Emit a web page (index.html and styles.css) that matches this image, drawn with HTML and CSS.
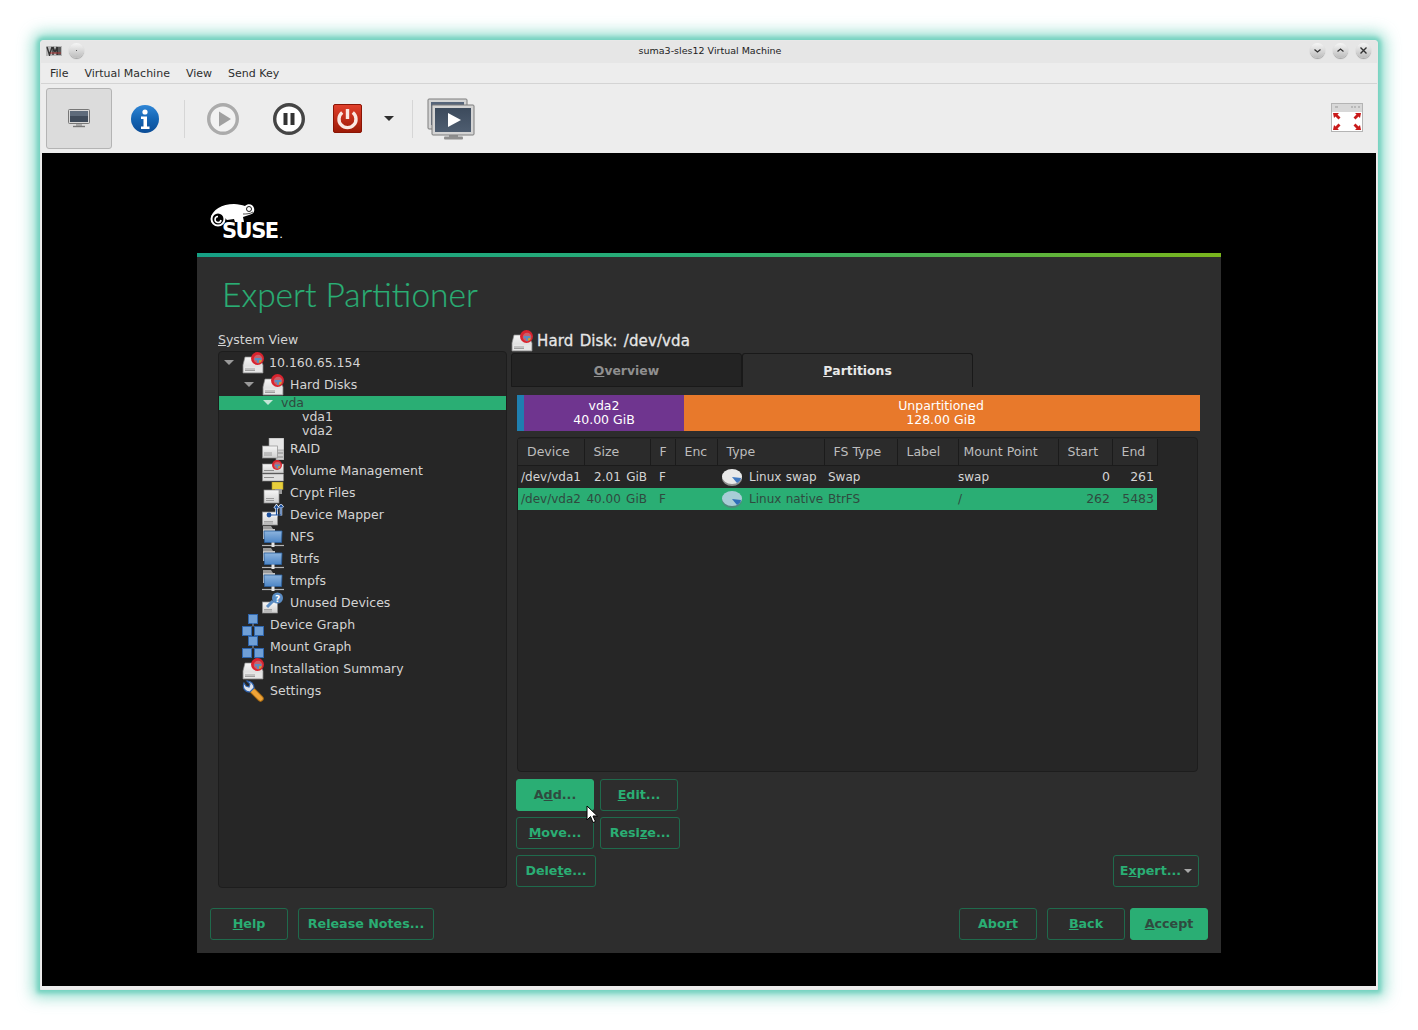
FILE: index.html
```html
<!DOCTYPE html>
<html lang="en">
<head>
    <meta charset="UTF-8">
    <title>suma3-sles12 Virtual Machine</title>
    <link rel="stylesheet" href="styles.css">
</head>
<body>
    <!-- Shared icons -->
    <svg class="defs" width="0" height="0">
        <defs>
            <linearGradient id="diskBody" x1="0" y1="0" x2="0" y2="1">
                <stop offset="0" stop-color="#f6f6f6"/>
                <stop offset="1" stop-color="#cfcfcf"/>
            </linearGradient>
            <linearGradient id="folderBlue" x1="0" y1="0" x2="0" y2="1">
                <stop offset="0" stop-color="#8db4de"/>
                <stop offset="1" stop-color="#4d86c6"/>
            </linearGradient>
            <linearGradient id="infoBlue" x1="0" y1="0" x2="0" y2="1">
                <stop offset="0" stop-color="#2f86d6"/>
                <stop offset=".5" stop-color="#1465b4"/>
                <stop offset="1" stop-color="#0b4c96"/>
            </linearGradient>
            <linearGradient id="powerRed" x1="0" y1="0" x2="0" y2="1">
                <stop offset="0" stop-color="#e2402c"/>
                <stop offset="1" stop-color="#9c1a06"/>
            </linearGradient>
            <linearGradient id="monScreen" x1="0" y1="0" x2="0" y2="1">
                <stop offset="0" stop-color="#3c4a5c"/>
                <stop offset="1" stop-color="#4e5d70"/>
            </linearGradient>

            <symbol id="ic-badge" viewBox="0 0 12 12">
                <circle cx="6" cy="6" r="6" fill="#d9232e"/>
                <circle cx="6.500" cy="6.500" r="4" fill="#c9606a"/>
                <path d="M3.500 5.500h6v2h-2v2.500h-2v-2.500h-2z" fill="#5a8fc0"/>
                <path d="M7.500 7.500h2.500a3.200 3.200 0 0 1-2.500 2.500z" fill="#d8a21f"/>
            </symbol>
            <symbol id="ic-disk" viewBox="0 0 22 22">
                <path d="M3 5h14l4 8v8H1v-8z" fill="url(#diskBody)" stroke="#8e8e8e" stroke-width=".7"/>
                <rect x="2" y="14.500" width="18" height="5.500" fill="#e6e6e6"/>
                <path d="M3 17h10M3 18.500h10" stroke="#8c8c8c" stroke-width=".8"/>
                <use href="#ic-badge" x="9" y="0" width="13" height="13"/>
            </symbol>
            <symbol id="ic-raid" viewBox="0 0 22 22">
                <rect x="7" y="0" width="15" height="13" fill="#e6e6e6" stroke="#8e8e8e" stroke-width=".6"/>
                <rect x="14" y="12" width="8" height="10" fill="#cfcfcf" stroke="#8e8e8e" stroke-width=".6"/>
                <path d="M16 15h5M16 19h5" stroke="#888"/>
                <rect x=".5" y="8" width="15" height="12" fill="url(#diskBody)" stroke="#8e8e8e" stroke-width=".7"/>
                <path d="M2 15h8M2 17h8" stroke="#8c8c8c" stroke-width=".8"/>
            </symbol>
            <symbol id="ic-lvm" viewBox="0 0 22 22">
                <rect x=".5" y="4" width="21" height="9" fill="url(#diskBody)" stroke="#8e8e8e" stroke-width=".6"/>
                <rect x=".5" y="14" width="21" height="7" fill="#e0e0e0" stroke="#8e8e8e" stroke-width=".6"/>
                <path d="M2 10.500h10M2 17.500h10" stroke="#8c8c8c"/>
                <use href="#ic-badge" x="9" y="0" width="12" height="10"/>
            </symbol>
            <symbol id="ic-crypt" viewBox="0 0 22 22">
                <rect x="10" y="0" width="11" height="7.500" fill="#e8cf3c" stroke="#a89420" stroke-width=".6"/>
                <rect x="13" y="7" width="7" height="5" fill="#9a9a9a"/>
                <rect x="2" y="8" width="15" height="13" fill="url(#diskBody)" stroke="#8e8e8e" stroke-width=".7"/>
                <path d="M4 16.500h8M4 18.500h8" stroke="#8c8c8c" stroke-width=".8"/>
            </symbol>
            <symbol id="ic-mapper" viewBox="0 0 22 22">
                <rect x=".5" y="8" width="15" height="13" fill="url(#diskBody)" stroke="#8e8e8e" stroke-width=".7"/>
                <path d="M2 17.500h9M2 19h9" stroke="#8c8c8c" stroke-width=".7"/>
                <path d="M7 11h7.500V3M19 11.500V1.500M12.500 4.500l2-3 2 3M17 3.500l2-2.500 2 2.500" fill="none" stroke="#fff" stroke-width="2.400"/>
                <circle cx="7" cy="11" r="2.400" fill="#1b4f9c"/>
                <path d="M7 11h12V1.500M14.500 11V2M12.500 4.500l2-3 2 3M17 3.500l2-2.500 2 2.500" fill="none" stroke="#1b4f9c" stroke-width="1.200"/>
            </symbol>
            <symbol id="ic-nfs" viewBox="0 0 22 22">
                <path d="M1 0h8l2 3H1z" fill="#9a9a9a"/>
                <rect x="1" y="3" width="12" height="10" fill="#c4c4c4"/>
                <path d="M2 5h18l-.5 11.500H2.500z" fill="url(#folderBlue)" stroke="#2a5f9e" stroke-width=".8"/>
                <path d="M0 19.500h22" stroke="#b5b5b5" stroke-width="1.200"/>
                <rect x="9.500" y="16.500" width="3" height="4.500" fill="#e4e4e4"/>
            </symbol>
            <symbol id="ic-unused" viewBox="0 0 22 22">
                <rect x=".5" y="10" width="15" height="11" fill="url(#diskBody)" stroke="#8e8e8e" stroke-width=".7"/>
                <path d="M2 17.500h8M2 19h8" stroke="#8c8c8c" stroke-width=".7"/>
                <path d="M5 15l6-6" stroke="#5b8dc4" stroke-width="3"/>
                <circle cx="15.500" cy="6" r="5.500" fill="#5b8dc4"/>
                <text x="15.500" y="9.500" class="q-mark">?</text>
            </symbol>
            <symbol id="ic-graph" viewBox="0 0 22 22">
                <rect x="6.500" y=".5" width="9" height="9" fill="#6f9fd6" stroke="#2f66ad"/>
                <rect x=".5" y="12.500" width="9" height="9" fill="#6f9fd6" stroke="#2f66ad"/>
                <rect x="12.500" y="12.500" width="9" height="9" fill="#6f9fd6" stroke="#2f66ad"/>
                <path d="M11 9.500v3" stroke="#8aa6cc"/>
            </symbol>
            <symbol id="ic-settings" viewBox="0 0 22 22">
                <path d="M9 9l9.500 9.500" stroke="#a76a12" stroke-width="6.500" stroke-linecap="round"/>
                <path d="M9 9l9.500 9.500" stroke="#eea338" stroke-width="4.500" stroke-linecap="round"/>
                <path d="M2 3C0 8 3 12 8 12l4-4C12 4 9 1 5 1l3 3-1 3-3-1z" fill="#dfe4ec" stroke="#2f62ad" stroke-width="1.200"/>
            </symbol>
            <symbol id="ic-part" viewBox="0 0 22 22">
                <ellipse cx="11" cy="12.500" rx="10" ry="7.500" fill="#8f8f8f"/>
                <ellipse cx="11" cy="10.500" rx="10" ry="7.500" fill="#e9e9e9"/>
                <path d="M11 11l9 1c0 2-2 4-4 5z" fill="#3f78c0"/>
            </symbol>
            <symbol id="ic-part-sel" viewBox="0 0 22 22">
                <ellipse cx="11" cy="12.500" rx="10" ry="7.500" fill="#4e8b7c"/>
                <ellipse cx="11" cy="10.500" rx="10" ry="7.500" fill="#a8cdd6"/>
                <path d="M11 11l9 1c0 2-2 4-4 5z" fill="#2f6fb8"/>
            </symbol>
            <symbol id="ic-monitor" viewBox="0 0 48 42">
                <rect x="1" y="1" width="39" height="30" rx="1" fill="#d4d4d4" stroke="#7c7c7c"/>
                <rect x="4" y="4" width="33" height="23" fill="#56657a"/>
            </symbol>
        </defs>
    </svg>

    <div class="window">
        <div class="titlebar">
            <svg class="app-icon" width="16" height="10" viewBox="0 0 16 10">
                <rect width="16" height="10" fill="#b8b8b8"/>
                <path d="M1 1l2.500 8L6 1M7 9V1l2 5 2-5v8M12 9V1M14 9V1" fill="none" stroke="#333" stroke-width="1.400"/>
                <path d="M4 7h11" stroke="#a33" stroke-width="1"/>
            </svg>
            <span class="wm-btn wm-pin"><i></i></span>
            <span class="title-text">suma3-sles12 Virtual Machine</span>
            <span class="wm-right">
                <span class="wm-btn">
                    <svg width="15" height="15" viewBox="0 0 15 15"><path d="M4.500 6.500l3 2.500 3-2.500" fill="none" stroke="#333" stroke-width="1.300"/></svg>
                </span>
                <span class="wm-btn">
                    <svg width="15" height="15" viewBox="0 0 15 15"><path d="M4.500 8.500l3-2.500 3 2.500" fill="none" stroke="#333" stroke-width="1.300"/></svg>
                </span>
                <span class="wm-btn">
                    <svg width="15" height="15" viewBox="0 0 15 15"><path d="M4.500 4.500l6 6M10.500 4.500l-6 6" fill="none" stroke="#333" stroke-width="1.400"/></svg>
                </span>
            </span>
        </div>

        <div class="menubar">
            <span>File</span>
            <span>Virtual Machine</span>
            <span>View</span>
            <span>Send Key</span>
        </div>

        <div class="toolbar">
            <div class="tool tool-active">
                <svg width="24" height="20" viewBox="0 0 24 20">
                    <rect x="1.500" y=".5" width="21" height="14" rx="1" fill="#d8d8d8" stroke="#777"/>
                    <rect x="3" y="2" width="18" height="11" fill="#3f4b5a"/>
                    <path d="M3 2h18v5H3z" fill="#5e6b7b"/>
                    <path d="M9 15h6v2H9z" fill="#aaa"/>
                    <path d="M6 17.500h12" stroke="#777" stroke-width="1.400"/>
                </svg>
            </div>
            <div class="tool tool-info">
                <svg width="30" height="30" viewBox="0 0 30 30">
                    <circle cx="15" cy="15" r="14" fill="url(#infoBlue)"/>
                    <circle cx="15" cy="8" r="2.600" fill="#fff"/>
                    <path d="M11 12.500h6v10h2.500v2.500h-8.500v-2.500h2.500v-7.500h-2.500z" fill="#fff"/>
                </svg>
            </div>
            <div class="tool-sep"></div>
            <div class="tool tool-play">
                <svg width="32" height="32" viewBox="0 0 32 32">
                    <circle cx="16" cy="16" r="14.300" fill="#f2f2f2" stroke="#ababab" stroke-width="3.400"/>
                    <path d="M12 8.500l12 7.500-12 7.500z" fill="#a0a0a0"/>
                </svg>
            </div>
            <div class="tool tool-pause">
                <svg width="32" height="32" viewBox="0 0 32 32">
                    <circle cx="16" cy="16" r="14.300" fill="#fff" stroke="#454545" stroke-width="3.400"/>
                    <rect x="10.500" y="10" width="4" height="12" fill="#333"/>
                    <rect x="17.500" y="10" width="4" height="12" fill="#333"/>
                </svg>
            </div>
            <div class="tool tool-power">
                <svg width="29" height="29" viewBox="0 0 29 29">
                    <rect x=".5" y=".5" width="28" height="28" rx="1.500" fill="url(#powerRed)" stroke="#8a1505"/>
                    <path d="M9.200 8.500a8.500 8.500 0 1 0 10.600 0" fill="none" stroke="#fbe8e2" stroke-width="3.400"/>
                    <path d="M14.500 5v10" stroke="#fbe8e2" stroke-width="3.400"/>
                </svg>
            </div>
            <div class="tool-arrow"></div>
            <div class="tool-sep"></div>
            <div class="tool tool-console">
                <svg width="48" height="42" viewBox="0 0 48 42">
                    <use href="#ic-monitor" width="48" height="42"/>
                    <rect x="5" y="7" width="42" height="30" rx="1" fill="#d4d4d4" stroke="#7c7c7c"/>
                    <rect x="8" y="10" width="36" height="24" fill="url(#monScreen)"/>
                    <path d="M21 15l13 7-13 7z" fill="#fff"/>
                    <path d="M22 37h9v2h-9z" fill="#8a8a8a"/>
                    <rect x="17" y="38.500" width="19" height="3" rx="1" fill="#8f8f8f"/>
                </svg>
            </div>
            <div class="tool-fullscreen">
                <svg width="32" height="29" viewBox="0 0 32 29">
                    <rect x=".5" y=".5" width="31" height="28" fill="#fff" stroke="#b4b4b4"/>
                    <rect x="1" y="1" width="30" height="8" fill="#d8d8d8"/>
                    <path d="M4 4h3M20 4h2M23 4h2M27 4h2" stroke="#999"/>
                    <g fill="#c91a1a">
                        <path d="M2 10h6l-1.500 1.500 3 3-2 2-3-3L3 15z"/>
                        <path d="M30 10h-6l1.500 1.500-3 3 2 2 3-3 1.500 1.500z"/>
                        <path d="M2 27h6l-1.500-1.500 3-3-2-2-3 3L3 22z"/>
                        <path d="M30 27h-6l1.500-1.500-3-3 2-2 3 3 1.500-1.500z"/>
                    </g>
                </svg>
            </div>
        </div>

        <div class="vm-screen">
            <div class="logo">
                <svg class="logo-mark" width="46" height="26" viewBox="0 0 46 26">
                    <path d="M1 15C2 7 12 1 24 1c4 0 8 1 11 2 3-3 8-2 9 2 1 4-1 6-5 7-2 1-4 1-6 2l1 5H25l-1-3-7 1-3-3c-1-2-3-3-5-3z" fill="#fff"/>
                    <circle cx="8" cy="16" r="6.500" fill="#000" stroke="#fff" stroke-width="2"/>
                    <path d="M11 17a3 3 0 1 1-3-3.500" fill="none" stroke="#fff" stroke-width="1.600"/>
                    <circle cx="39" cy="6" r="2.500" fill="#fff" stroke="#000" stroke-width=".9"/>
                    <path d="M33 11c3 0 7 0 10-2" fill="none" stroke="#000" stroke-width=".7"/>
                </svg>
                <span class="logo-text">SUSE<small>.</small></span>
            </div>

            <div class="panel">
                <h1>Expert Partitioner</h1>

                <div class="columns">
                    <div class="left-col">
                        <div class="label"><u>S</u>ystem View</div>
                        <ul class="tree">
                            <li class="lvl0"><b class="arrow"></b><svg class="ico"><use href="#ic-disk"/></svg>10.160.65.154</li>
                            <li class="lvl1"><b class="arrow"></b><svg class="ico"><use href="#ic-disk"/></svg>Hard Disks</li>
                            <li class="lvl2 sel"><b class="arrow"></b>vda</li>
                            <li class="lvl3">vda1</li>
                            <li class="lvl3">vda2</li>
                            <li class="lvl1"><svg class="ico"><use href="#ic-raid"/></svg>RAID</li>
                            <li class="lvl1"><svg class="ico"><use href="#ic-lvm"/></svg>Volume Management</li>
                            <li class="lvl1"><svg class="ico"><use href="#ic-crypt"/></svg>Crypt Files</li>
                            <li class="lvl1"><svg class="ico"><use href="#ic-mapper"/></svg>Device Mapper</li>
                            <li class="lvl1"><svg class="ico"><use href="#ic-nfs"/></svg>NFS</li>
                            <li class="lvl1"><svg class="ico"><use href="#ic-nfs"/></svg>Btrfs</li>
                            <li class="lvl1"><svg class="ico"><use href="#ic-nfs"/></svg>tmpfs</li>
                            <li class="lvl1"><svg class="ico"><use href="#ic-unused"/></svg>Unused Devices</li>
                            <li class="lvl0"><svg class="ico"><use href="#ic-graph"/></svg>Device Graph</li>
                            <li class="lvl0"><svg class="ico"><use href="#ic-graph"/></svg>Mount Graph</li>
                            <li class="lvl0"><svg class="ico"><use href="#ic-disk"/></svg>Installation Summary</li>
                            <li class="lvl0"><svg class="ico"><use href="#ic-settings"/></svg>Settings</li>
                        </ul>
                    </div>

                    <div class="right-col">
                        <div class="disk-head"><svg class="ico"><use href="#ic-disk"/></svg>Hard Disk: /dev/vda</div>
                        <div class="tabs">
                            <div class="tab"><u>O</u>verview</div>
                            <div class="tab tab-active"><u>P</u>artitions</div>
                        </div>

                        <div class="tab-body">
                            <div class="usage">
                                <div class="seg seg-blue"></div>
                                <div class="seg seg-purple">vda2<br>40.00 GiB</div>
                                <div class="seg seg-orange">Unpartitioned<br>128.00 GiB</div>
                            </div>

                            <div class="table-box">
                                <table class="parts">
                                    <thead>
                                        <tr>
                                            <th class="c-dev">Device</th>
                                            <th class="c-size">Size</th>
                                            <th class="c-f">F</th>
                                            <th class="c-enc">Enc</th>
                                            <th class="c-type">Type</th>
                                            <th class="c-fs">FS Type</th>
                                            <th class="c-label">Label</th>
                                            <th class="c-mount">Mount Point</th>
                                            <th class="c-start">Start</th>
                                            <th class="c-end">End</th>
                                        </tr>
                                    </thead>
                                    <tbody>
                                        <tr>
                                            <td class="td-dev">/dev/vda1</td>
                                            <td class="td-num td-size">2.01 GiB</td>
                                            <td class="td-f">F</td>
                                            <td></td>
                                            <td class="td-type"><svg class="ico"><use href="#ic-part"/></svg>Linux swap</td>
                                            <td class="td-fs">Swap</td>
                                            <td></td>
                                            <td class="td-mount">swap</td>
                                            <td class="td-num td-start">0</td>
                                            <td class="td-num">261</td>
                                        </tr>
                                        <tr class="sel">
                                            <td class="td-dev">/dev/vda2</td>
                                            <td class="td-num td-size">40.00 GiB</td>
                                            <td class="td-f">F</td>
                                            <td></td>
                                            <td class="td-type"><svg class="ico"><use href="#ic-part-sel"/></svg>Linux native</td>
                                            <td class="td-fs">BtrFS</td>
                                            <td></td>
                                            <td class="td-mount">/</td>
                                            <td class="td-num td-start">262</td>
                                            <td class="td-num">5483</td>
                                        </tr>
                                    </tbody>
                                </table>
                            </div>

                            <div class="btn-rows">
                                <div class="btn-row">
                                    <button class="btn btn-primary btn-78">A<u>d</u>d...</button>
                                    <button class="btn btn-78"><u>E</u>dit...</button>
                                </div>
                                <div class="btn-row">
                                    <button class="btn btn-78"><u>M</u>ove...</button>
                                    <button class="btn btn-80">Resi<u>z</u>e...</button>
                                </div>
                                <div class="btn-row btn-row-last">
                                    <button class="btn btn-80">Dele<u>t</u>e...</button>
                                    <button class="btn btn-expert">E<u>x</u>pert...<b class="caret"></b></button>
                                </div>
                            </div>
                        </div>
                    </div>
                </div>

                <div class="footer">
                    <button class="btn btn-78"><u>H</u>elp</button>
                    <button class="btn btn-notes">Re<u>l</u>ease Notes...</button>
                    <button class="btn btn-78 btn-abort">Abo<u>r</u>t</button>
                    <button class="btn btn-78"><u>B</u>ack</button>
                    <button class="btn btn-primary btn-78 btn-accept"><u>A</u>ccept</button>
                </div>
            </div>
        </div>

        <svg class="cursor" width="12" height="19" viewBox="0 0 12 19">
            <path d="M1 1v14l3.500-3.500 2.500 6 2.500-1-2.500-5.500h4.500z" fill="#fff" stroke="#000"/>
        </svg>
    </div>
</body>
</html>
```

FILE: styles.css
```css
* {
    margin: 0;
    padding: 0;
    box-sizing: border-box;
}

body {
    background: #fff;
    width: 1418px;
    height: 1030px;
    padding: 40px;
    overflow: hidden;
    font-family: 'DejaVu Sans', sans-serif;
    font-size: 12.5px;
}

.defs {
    position: absolute;
}

.q-mark {
    font-size: 9px;
    font-weight: bold;
    fill: #fff;
    text-anchor: middle;
}

/* Window frame */
.window {
    position: relative;
    width: 1338px;
    height: 950px;
    background: #ededed;
    border-radius: 3px 3px 0 0;
    border: 1px solid #e8e8e8;
    box-shadow: 0 0 4px 3px #74d2bf, 0 0 15px 7px rgba(98, 205, 184, 0.7);
    display: flex;
    flex-direction: column;
}

.titlebar {
    position: relative;
    height: 22px;
    background: #e6e6e6;
    display: flex;
    align-items: center;
    padding: 0 6px 3px 5px;
    flex-shrink: 0;
    color: #222;
}

.app-icon {
    margin-right: 7px;
}

.wm-btn {
    width: 15px;
    height: 15px;
    border-radius: 50%;
    background: linear-gradient(#f6f6f6, #bcbcbc);
    box-shadow: 0 1px 1px rgba(0, 0, 0, 0.3);
    display: block;
}

.wm-btn svg {
    display: block;
}

.wm-pin {
    position: relative;
}

.wm-pin i {
    position: absolute;
    left: 7px;
    top: 7px;
    width: 1px;
    height: 1px;
    background: #555;
}

.title-text {
    position: absolute;
    left: 2px;
    right: 0;
    text-align: center;
    font-size: 9.5px;
}

.wm-right {
    margin-left: auto;
    display: flex;
    gap: 8px;
}

.menubar {
    height: 21px;
    flex-shrink: 0;
    background: #ededed;
    border-bottom: 1px solid #d4d4d4;
    display: flex;
    align-items: center;
    gap: 16px;
    padding-left: 9px;
    font-size: 11px;
    color: #2e2e2e;
}

.toolbar {
    height: 69px;
    flex-shrink: 0;
    background: #ededed;
    display: flex;
    align-items: center;
    padding: 0 14px 0 5px;
}

.tool {
    display: flex;
    align-items: center;
    justify-content: center;
}

.tool-active {
    width: 66px;
    height: 61px;
    background: #dcdcdc;
    border: 1px solid #b4b4b4;
    border-radius: 3px;
}

.tool-info {
    width: 66px;
    margin-right: 6px;
}

.tool-sep {
    width: 1px;
    height: 38px;
    background: #d6d6d6;
}

.tool-play {
    margin-left: 22px;
    width: 32px;
}

.tool-pause {
    margin-left: 34px;
    width: 32px;
}

.tool-power {
    margin-left: 28px;
    width: 29px;
}

.tool-arrow {
    margin: 0 18px 0 22px;
    width: 0;
    height: 0;
    border-left: 5px solid transparent;
    border-right: 5px solid transparent;
    border-top: 5px solid #2e2e2e;
}

.tool-console {
    margin-left: 14px;
    width: 48px;
}

.tool-fullscreen {
    margin: 0 0 2px auto;
    height: 29px;
}

.tool-fullscreen svg,
.tool svg {
    display: block;
}

/* Guest screen */
.vm-screen {
    flex: 1;
    margin: 0 1px 3px;
    background: #000;
    padding-left: 155px;
    display: flex;
    flex-direction: column;
}

.logo {
    position: relative;
    height: 100px;
    flex-shrink: 0;
}

.logo-mark {
    position: absolute;
    left: 13px;
    top: 50px;
}

.logo-text {
    position: absolute;
    left: 25px;
    top: 65px;
    font-size: 21px;
    font-weight: bold;
    letter-spacing: -1.5px;
    line-height: 26px;
    color: #fff;
}

.logo-text small {
    font-size: 7px;
    letter-spacing: 0;
    margin-left: 2px;
}

.panel {
    width: 1024px;
    height: 700px;
    background: #2d2d2d;
    border-top: 4px solid;
    border-image: linear-gradient(90deg, #16a085, #2aae74 50%, #7ab51d) 1;
    color: #d4d4d4;
    display: flex;
    flex-direction: column;
}

.panel h1 {
    font-family: Lato, sans-serif;
    font-weight: 300;
    font-size: 33.500px;
    line-height: 40px;
    color: #2aae74;
    -webkit-text-stroke: 0.2px #2aae74;
    margin: 17px 0 0 25px;
    height: 59px;
}

.columns {
    flex: 1;
    display: flex;
    padding-left: 21px;
    height: 556px;
}

.left-col {
    width: 289px;
    margin-right: 4px;
    display: flex;
    flex-direction: column;
}

.label {
    height: 18px;
    line-height: 13px;
}

.tree {
    list-style: none;
    height: 537px;
    background: #262626;
    border: 1px solid #1d1d1d;
    border-radius: 4px;
}

.tree li {
    height: 22px;
    padding-bottom: 2px;
    display: flex;
    align-items: center;
    white-space: nowrap;
}

.lvl0 {
    padding-left: 23px;
}

.lvl1 {
    padding-left: 43px;
}

.tree .lvl2 {
    height: 14px;
    padding-left: 44px;
}

.tree .lvl3 {
    height: 14px;
    padding-left: 83px;
}

.tree .sel {
    background: #2aae74;
    color: #2f4a3f;
}

.tree .sel .arrow {
    border-top-color: #c4e6d6;
    position: absolute;
    margin-left: -1px;
}

.tree .lvl2.sel {
    padding-left: 62px;
}

.arrow {
    position: absolute;
    width: 0;
    height: 0;
    margin-left: -18px;
    border-left: 5px solid transparent;
    border-right: 5px solid transparent;
    border-top: 5px solid #9a9a9a;
}

.tree .lvl2 .arrow {
    margin-left: -18px;
}

.ico {
    width: 22px;
    height: 22px;
    margin-right: 5px;
    flex-shrink: 0;
}

.tree .ico {
    margin-top: 2px;
    margin-right: 6px;
}

.tree li:first-child .ico {
    margin-right: 5px;
}

.right-col {
    flex: 1;
    display: flex;
    flex-direction: column;
}

.disk-head {
    height: 21px;
    display: flex;
    align-items: center;
    font-size: 15px;
    font-weight: 500;
    word-spacing: 1.500px;
    letter-spacing: 0.1px;
    color: #e6e6e6;
    -webkit-text-stroke: 0.3px #e6e6e6;
    margin: -3px 0 2px;
    flex-shrink: 0;
}

.disk-head .ico {
    margin-right: 4px;
}

.tabs {
    display: flex;
    height: 34px;
    flex-shrink: 0;
}

.tab {
    width: 231px;
    display: flex;
    align-items: center;
    justify-content: center;
    font-weight: bold;
    font-size: 12.400px;
    color: #8f8f8f;
    background: #232323;
    border: 1px solid #191919;
    border-radius: 3px 3px 0 0;
}

.tab-active {
    color: #e8e8e8;
    background: #2d2d2d;
    border-bottom: none;
}

.tab-body {
    padding: 8px 0 0 5px;
    flex: 1;
}

.usage {
    display: flex;
    width: 683px;
    margin-left: 1px;
    height: 36px;
    color: #fff;
    text-align: center;
    line-height: 14px;
}

.seg {
    padding-top: 4px;
}

.seg-blue {
    width: 7px;
    background: #1f7fb0;
}

.seg-purple {
    width: 160px;
    background: #6f358f;
}

.seg-orange {
    flex: 1;
    padding-right: 2px;
    background: #e8792b;
}

.table-box {
    margin: 6px 0 0 1px;
    width: 681px;
    height: 335px;
    background: #262626;
    border: 1px solid #1d1d1d;
    border-radius: 4px;
}

.parts {
    border-collapse: collapse;
    table-layout: fixed;
    width: 639px;
    margin-top: 1px;
    color: #d4d4d4;
    font-size: 12.500px;
}

.parts th {
    height: 26px;
    font-weight: normal;
    text-align: left;
    color: #bdbdbd;
    background: #2b2b2b;
    border-right: 1px solid #1b1b1b;
    border-bottom: 1px solid #1b1b1b;
    padding-left: 9px;
    white-space: nowrap;
    overflow: hidden;
}

.parts td {
    height: 22px;
    white-space: nowrap;
    font-size: 12px;
    word-spacing: 1.500px;
}

.parts .sel td {
    background: #2aae74;
    color: #2f4a3f;
}

.c-dev { width: 66px; }
.c-size { width: 66px; }
.c-f { width: 25px; }
.c-enc { width: 42px; }
.c-type { width: 107px; }
.c-fs { width: 73px; }
.c-label { width: 61px; }
.c-mount { width: 100px; }
.c-start { width: 54px; }
.c-end { width: 45px; }

.parts .c-mount {
    padding-left: 5px;
}

.td-dev {
    padding-left: 3px;
}

.parts .td-num {
    text-align: right;
    padding-right: 3px;
    font-size: 12.500px;
    word-spacing: 0;
}

.parts .td-size {
    font-size: 12px;
    word-spacing: 1.500px;
}

.parts .td-start {
    padding-right: 2px;
}

.td-f {
    padding-left: 9px;
}

.parts .td-type {
    padding-left: 4px;
    word-spacing: 0.500px;
}

.td-type .ico {
    width: 22px;
    height: 22px;
    vertical-align: middle;
    margin-right: 6px;
}

.td-fs {
    padding-left: 4px;
}

/* Buttons */
.btn {
    height: 32px;
    padding-bottom: 2px;
    background: transparent;
    border: 1px solid #1f6a4c;
    border-radius: 3px;
    font-family: 'DejaVu Sans', sans-serif;
    font-size: 12.700px;
    font-weight: bold;
    color: #2aae74;
    white-space: nowrap;
}

.btn-primary {
    background: #2aae74;
    border-color: #2aae74;
    color: #2f4a3f;
}

.btn-78 {
    width: 78px;
}

.btn-80 {
    width: 80px;
}

.btn-notes {
    width: 136px;
    margin-left: 10px;
}

.btn-rows {
    margin-top: 7px;
    width: 683px;
}

.btn-row {
    display: flex;
    gap: 6px;
    margin-bottom: 6px;
}

.btn-row-last {
    justify-content: space-between;
}

.btn-expert {
    width: 86px;
}

.caret {
    display: inline-block;
    margin-left: 3px;
    vertical-align: middle;
    border-left: 4px solid transparent;
    border-right: 4px solid transparent;
    border-top: 4px solid #a8a8a8;
}

.footer {
    height: 45px;
    flex-shrink: 0;
    display: flex;
    align-items: flex-start;
    padding-left: 13px;
}

.footer .btn-78 {
    margin-left: 10px;
}

.footer .btn-78:first-child {
    margin-left: 0;
}

.footer .btn-abort {
    margin-left: auto;
}

.footer .btn-accept {
    margin: 0 13px 0 5px;
}

.cursor {
    position: absolute;
    left: 545px;
    top: 764px;
}
```
